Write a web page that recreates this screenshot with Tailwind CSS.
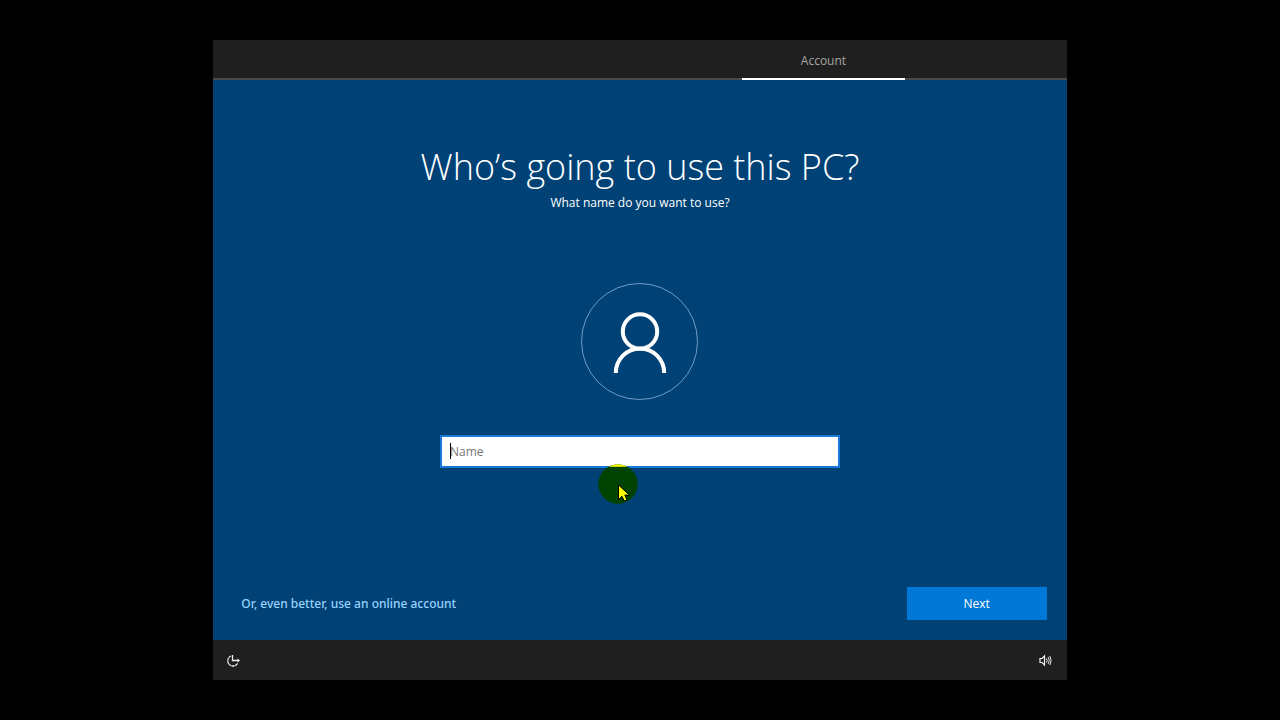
<!DOCTYPE html>
<html lang="en">
<head>
<meta charset="utf-8">
<meta name="viewport" content="width=device-width, initial-scale=1">
<title>Account setup</title>
<script src="https://cdn.jsdelivr.net/npm/@tailwindcss/browser@4"></script>
</head>
<body class="bg-black font-['Open_Sans','Noto_Sans',sans-serif] text-xs text-white">
<div class="mx-auto flex min-h-screen w-2/3 flex-col py-10">
  <header class="flex h-10 justify-end border-b-2 border-[#4c4a48] bg-[#1f1f1f]">
    <nav class="mr-[19%] flex w-[19%]" aria-label="Setup steps">
      <a href="#account" aria-current="step" class="-mb-0.5 flex flex-1 items-center justify-center border-b-2 border-white pt-1 text-[#a6a6a6]">Account</a>
    </nav>
  </header>

  <main id="account" class="flex flex-1 flex-col bg-[#004275]">
    <form class="flex flex-1 flex-col">
      <div class="flex flex-1 flex-col items-center pt-16">
        <h1 class="text-4xl leading-[46px] font-light whitespace-nowrap">Who’s going to use this PC?</h1>
        <p class="mt-[5px] leading-4">What name do you want to use?</p>

        <div class="mt-[72px] flex size-[117px] items-center justify-center rounded-full border border-[#6f9cc8]">
          <svg class="h-16 w-14" viewBox="0 0 56 64" fill="none" stroke="white" stroke-width="4" aria-hidden="true">
            <circle cx="28" cy="21.500" r="17.200"/>
            <path d="M3.800 63A24.200 24.500 0 0 1 52.200 63"/>
          </svg>
        </div>

        <div class="relative mt-[35px] w-[400px]">
          <input type="text" aria-label="Name" placeholder="Name" class="block h-[33px] w-full border-2 border-[#1a78d8] bg-white px-2 text-black outline-none placeholder:text-[#767676]">
          <span class="absolute top-2 left-[10px] h-4 w-px bg-black"></span>
          <!-- Pointer with its highlight disc -->
          <svg class="absolute top-[29px] left-[158px] size-10" viewBox="0 0 40 40" aria-hidden="true">
            <circle cx="20" cy="20" r="19.700" fill="#004200"/>
            <path d="M10.500 2.800A19.700 19.700 0 0 1 29.500 2.800Z" fill="#ffff00"/>
            <path d="M20.500 21V35.500l3.500-3.200 2.200 4.700 2.800-1.200-2.200-4.700H31.500Z" fill="#ffff00" stroke="black" stroke-width="1"/>
          </svg>
        </div>
      </div>

      <div class="flex items-center justify-between pr-5 pb-5 pl-7">
        <a href="#online" class="font-['Noto_Sans','Open_Sans',sans-serif] font-medium text-[#99d2ff]">Or, even better, use an online account</a>
        <button type="button" class="h-[33px] w-[140px] bg-[#0078d7]">Next</button>
      </div>
    </form>
  </main>

  <footer class="flex h-10 items-center justify-between bg-[#1f1f1f] pr-[14px] pl-3">
    <button type="button" aria-label="Ease of access">
      <svg class="size-4" viewBox="0 0 16 16" fill="none" stroke="#f0f0f0" aria-hidden="true">
        <path d="M6 4A5.200 5.200 0 1 0 12.700 11" stroke-width="1.300" stroke-dasharray="2.800 .4"/>
        <path d="M7.500 3V8.500H14" stroke-width="1.300"/>
        <path d="M12.500 6.500L15 8.500L12.500 10.500Z" fill="#f0f0f0" stroke="none"/>
      </svg>
    </button>
    <button type="button" aria-label="Volume">
      <svg class="size-4" viewBox="0 0 16 16" fill="none" stroke="#f0f0f0" aria-hidden="true">
        <path d="M3 6.500H5L7.500 4V13L5 10.500H3Z" stroke-width="1.200"/>
        <path d="M9.500 6.500q1.300 2 0 4M11.200 5.200q2.200 3.300 0 6.600M12.800 4q2.800 4.500 0 9" stroke-width="1"/>
      </svg>
    </button>
  </footer>
</div>
</body>
</html>
